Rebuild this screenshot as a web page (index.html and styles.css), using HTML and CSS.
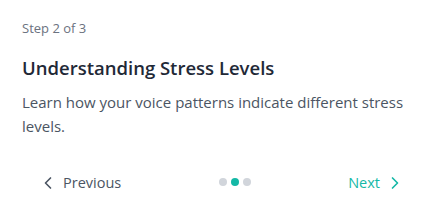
FILE: index.html
```html
<!DOCTYPE html>
<html>
<head>
    <meta charset="UTF-8">
    <title>Onboarding</title>
    <link rel="stylesheet" href="styles.css">
</head>
<body>
    <div class="step-card">
        <div class="step-label">Step 2 of 3</div>
        <h2 class="step-title">Understanding Stress Levels</h2>
        <p class="step-text">Learn how your voice patterns indicate different stress levels.</p>

        <div class="step-nav">
            <button class="nav-btn prev">
                <svg width="20" height="20" viewBox="0 0 24 24" fill="none" stroke="currentColor" stroke-width="2" stroke-linecap="round" stroke-linejoin="round"><path d="m15 18-6-6 6-6"/></svg>
                Previous
            </button>
            <div class="dots">
                <span class="dot"></span>
                <span class="dot active"></span>
                <span class="dot"></span>
            </div>
            <button class="nav-btn next">
                Next
                <svg width="20" height="20" viewBox="0 0 24 24" fill="none" stroke="currentColor" stroke-width="2" stroke-linecap="round" stroke-linejoin="round"><path d="m9 18 6-6-6-6"/></svg>
            </button>
        </div>
    </div>
</body>
</html>
```
FILE: styles.css
```css
/* Base */
body {
    margin: 0;
    background: #ffffff;
    font-family: "Open Sans", "Noto Sans", sans-serif;
    color: #1f2937;
}

.step-card {
    padding: 18px 22px;
}

.step-label {
    font-size: 13px;
    line-height: 20px;
    color: #6b7280;
}

.step-title {
    margin: 16px 0 0;
    font-size: 18.5px;
    line-height: 28px;
    font-weight: 600;
    color: #1f2937;
}

.step-text {
    margin: 8px 0 0;
    font-size: 15px;
    line-height: 24px;
    color: #4b5563;
}

/* Navigation row */
.step-nav {
    display: flex;
    justify-content: space-between;
    align-items: center;
    margin-top: 27px;
}

.nav-btn {
    display: flex;
    align-items: center;
    gap: 5px;
    padding: 6px 16px;
    border: none;
    background: none;
    font-family: inherit;
    font-size: 14.5px;
    line-height: 24px;
    cursor: pointer;
}

.nav-btn.prev {
    color: #4b5563;
}

.nav-btn.next {
    color: #14b8a6;
}

.dots {
    display: flex;
    gap: 4px;
    margin-top: -3px;
}

.dot {
    width: 8px;
    height: 8px;
    border-radius: 50%;
    background: #d1d5db;
}

.dot.active {
    background: #14b8a6;
}
```
